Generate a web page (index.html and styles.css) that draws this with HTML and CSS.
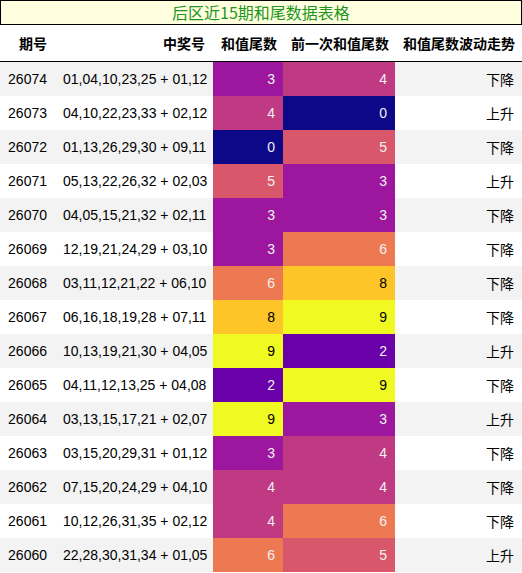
FILE: index.html
```html
<!DOCTYPE html>
<html lang="zh">
<head>
    <meta charset="UTF-8">
    <title>后区近15期和尾数据表格</title>
    <link rel="stylesheet" href="styles.css">
</head>
<body>
    <div class="caption">后区近15期和尾数据表格</div>
    <table class="data">
        <colgroup>
            <col class="c-issue">
            <col class="c-nums">
            <col class="c-sum">
            <col class="c-prev">
            <col class="c-trend">
        </colgroup>
        <thead>
            <tr>
                <th>期号</th>
                <th>中奖号</th>
                <th>和值尾数</th>
                <th>前一次和值尾数</th>
                <th>和值尾数波动走势</th>
            </tr>
        </thead>
        <tbody>
            <tr><td>26074</td><td>01,04,10,23,25 + 01,12</td><td class="v3">3</td><td class="v4">4</td><td>下降</td></tr>
            <tr><td>26073</td><td>04,10,22,23,33 + 02,12</td><td class="v4">4</td><td class="v0">0</td><td>上升</td></tr>
            <tr><td>26072</td><td>01,13,26,29,30 + 09,11</td><td class="v0">0</td><td class="v5">5</td><td>下降</td></tr>
            <tr><td>26071</td><td>05,13,22,26,32 + 02,03</td><td class="v5">5</td><td class="v3">3</td><td>上升</td></tr>
            <tr><td>26070</td><td>04,05,15,21,32 + 02,11</td><td class="v3">3</td><td class="v3">3</td><td>下降</td></tr>
            <tr><td>26069</td><td>12,19,21,24,29 + 03,10</td><td class="v3">3</td><td class="v6">6</td><td>下降</td></tr>
            <tr><td>26068</td><td>03,11,12,21,22 + 06,10</td><td class="v6">6</td><td class="v8">8</td><td>下降</td></tr>
            <tr><td>26067</td><td>06,16,18,19,28 + 07,11</td><td class="v8">8</td><td class="v9">9</td><td>下降</td></tr>
            <tr><td>26066</td><td>10,13,19,21,30 + 04,05</td><td class="v9">9</td><td class="v2">2</td><td>上升</td></tr>
            <tr><td>26065</td><td>04,11,12,13,25 + 04,08</td><td class="v2">2</td><td class="v9">9</td><td>下降</td></tr>
            <tr><td>26064</td><td>03,13,15,17,21 + 02,07</td><td class="v9">9</td><td class="v3">3</td><td>上升</td></tr>
            <tr><td>26063</td><td>03,15,20,29,31 + 01,12</td><td class="v3">3</td><td class="v4">4</td><td>下降</td></tr>
            <tr><td>26062</td><td>07,15,20,24,29 + 04,10</td><td class="v4">4</td><td class="v4">4</td><td>下降</td></tr>
            <tr><td>26061</td><td>10,12,26,31,35 + 02,12</td><td class="v4">4</td><td class="v6">6</td><td>下降</td></tr>
            <tr><td>26060</td><td>22,28,30,31,34 + 01,05</td><td class="v6">6</td><td class="v5">5</td><td>上升</td></tr>
        </tbody>
    </table>
</body>
</html>
```

FILE: styles.css
```css
/* Style général */
body {
    margin: 0;
    padding: 0;
    width: 522px;
    background: #fff;
    color: #000;
    font-family: "Liberation Sans", "Noto Sans CJK SC", sans-serif;
    font-size: 14px;
}

.caption {
    height: 23px;
    line-height: 23px;
    border: 1px solid #000;
    background-color: #ffffe0;
    color: #1e961e;
    text-align: center;
    font-size: 16px;
    font-family: "Noto Sans CJK SC", sans-serif;
}

.data {
    width: 522px;
    border-collapse: collapse;
    table-layout: fixed;
}

.c-issue { width: 55px; }
.c-nums { width: 158px; }
.c-sum { width: 70px; }
.c-prev { width: 112px; }
.c-trend { width: 127px; }

.data th {
    height: 36px;
    padding: 0 8px;
    text-align: right;
    font-weight: bold;
    font-family: "Noto Sans CJK SC", sans-serif;
    border-bottom: 1px solid #000;
    white-space: nowrap;
}

.data td {
    height: 34px;
    padding: 0 8px;
    text-align: right;
    white-space: nowrap;
}

.data tbody tr:nth-child(odd) {
    background-color: #f3f3f3;
}

/* dégradé plasma */
.v0 { background-color: #0d0887; color: #f1f1f1; }
.v2 { background-color: #6a00a8; color: #f1f1f1; }
.v3 { background-color: #9c179e; color: #f1f1f1; }
.v4 { background-color: #c03a83; color: #f1f1f1; }
.v5 { background-color: #d8576b; color: #f1f1f1; }
.v6 { background-color: #ed7953; color: #f1f1f1; }
.v8 { background-color: #fdc527; color: #000; }
.v9 { background-color: #f0f921; color: #000; }
```
